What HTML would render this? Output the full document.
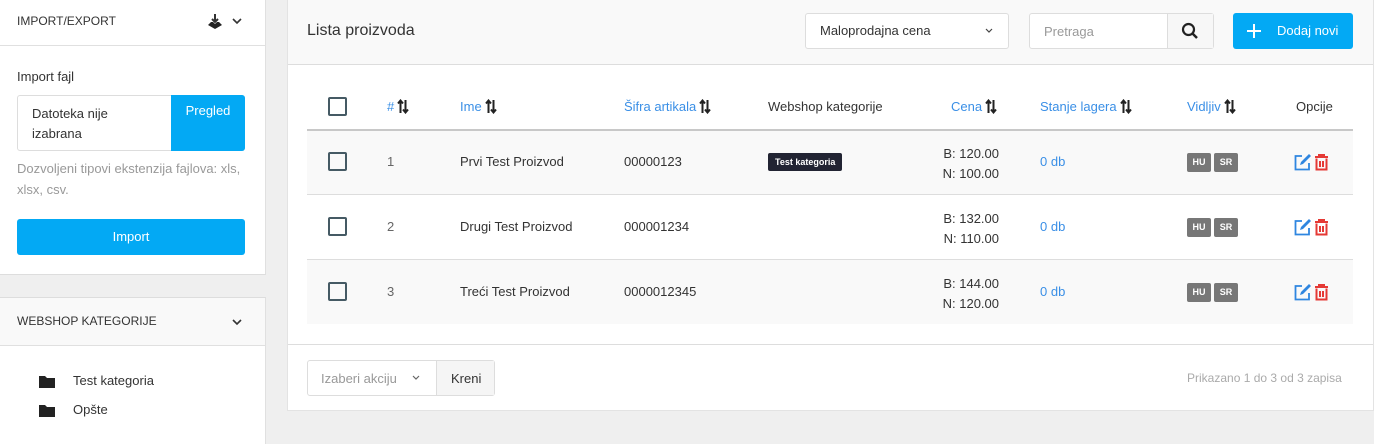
<!DOCTYPE html>
<html><head><meta charset="utf-8"><style>
*{box-sizing:border-box;margin:0;padding:0}
body{width:1374px;height:444px;background:#efefef;font-family:"Liberation Sans",sans-serif;font-size:13px;color:#333;position:relative;overflow:hidden}
.abs{position:absolute}
.side{left:0;width:266px;background:#fff;border-right:1px solid #e0e0e0}
.blue{color:#3a8fe6}
.cb{position:absolute;width:19px;height:19px;border:2px solid #455a64;border-radius:2px}
.th{position:absolute;top:99px;font-size:13px;white-space:nowrap}
.td{position:absolute;font-size:13px}
.badge{display:inline-block;background:#777;color:#fff;font-size:9px;font-weight:bold;width:24px;height:19px;line-height:19px;text-align:center;border-radius:2px;margin-right:3px}
.sort{display:inline-block;vertical-align:-3px;margin-left:3px}
</style></head><body>
<svg width="0" height="0" style="position:absolute"><defs><symbol id="s" viewBox="0 0 12 15"><path d="M3.5 14V2M1 4.5l2.5-3 2.5 3M8.5 1v12M6 10.5l2.5 3 2.5-3" stroke="#222" stroke-width="2" fill="none"/></symbol></defs></svg>
<!-- sidebar card 1 -->
<div class="abs side" style="top:0;height:275px;border-bottom:1px solid #ddd"></div>
<div class="abs" style="left:0;top:45px;width:265px;border-top:1px solid #e0e0e0"></div>
<div class="abs" style="left:17px;top:14px;font-size:12px;color:#333">IMPORT/EXPORT</div>
<svg class="abs" style="left:206px;top:13px" width="18" height="18" viewBox="0 0 18 18"><path d="M9 1v8M6 6l3 3 3-3" stroke="#333" stroke-width="2" fill="none"/><path d="M2 12l3-3h2l2 2 2-2h2l3 3-7 4z" fill="#222"/></svg>
<svg class="abs" style="left:232px;top:17px" width="10" height="8"><path d="M1 2l4 4 4-4" stroke="#333" stroke-width="1.6" fill="none"/></svg>
<div class="abs" style="left:17px;top:69px;font-size:13px">Import fajl</div>
<div class="abs" style="left:17px;top:95px;width:228px;height:56px;border:1px solid #ddd;border-radius:3px;background:#fff"></div>
<div class="abs" style="left:32px;top:104px;line-height:20px;font-size:13px">Datoteka nije<br>izabrana</div>
<div class="abs" style="left:171px;top:95px;width:74px;height:56px;background:#03a9f4;border-radius:0 3px 3px 0;color:#fff;text-align:center;padding-top:8px;font-size:13px">Pregled</div>
<div class="abs" style="left:17px;top:158px;width:240px;line-height:21px;color:#999;font-size:13px">Dozvoljeni tipovi ekstenzija fajlova: xls, xlsx, csv.</div>
<div class="abs" style="left:17px;top:219px;width:228px;height:36px;background:#03a9f4;border-radius:3px;color:#fff;text-align:center;line-height:36px">Import</div>
<!-- sidebar card 2 -->
<div class="abs side" style="top:297px;height:147px;border-top:1px solid #ddd"></div>
<div class="abs" style="left:0;top:298px;width:265px;height:48px;background:#f9f9f9;border-bottom:1px solid #e0e0e0"></div>
<div class="abs" style="left:17px;top:314px;font-size:12px">WEBSHOP KATEGORIJE</div>
<svg class="abs" style="left:232px;top:318px" width="10" height="8"><path d="M1 2l4 4 4-4" stroke="#333" stroke-width="1.6" fill="none"/></svg>
<svg class="abs" style="left:39px;top:375px" width="16" height="13"><path d="M0 1h6l2 2h8v10H0z" fill="#222"/></svg>
<div class="abs" style="left:73px;top:373px">Test kategoria</div>
<svg class="abs" style="left:39px;top:404px" width="16" height="13"><path d="M0 1h6l2 2h8v10H0z" fill="#222"/></svg>
<div class="abs" style="left:73px;top:402px">Opšte</div>
<!-- main card -->
<div class="abs" style="left:287px;top:0;width:1087px;height:411px;background:#fff;border:1px solid #e3e3e3;border-top:none"></div>
<div class="abs" style="left:288px;top:0;width:1085px;height:65px;background:#f9f9f9;border-bottom:1px solid #ddd"></div>
<div class="abs" style="left:307px;top:22px;font-size:16px;color:#333">Lista proizvoda</div>
<div class="abs" style="left:805px;top:13px;width:204px;height:36px;border:1px solid #ddd;border-radius:3px;background:#fff"></div>
<div class="abs" style="left:820px;top:23px">Maloprodajna cena</div>
<svg class="abs" style="left:985px;top:28px" width="8" height="6"><path d="M1 1l3 3 3-3" stroke="#444" stroke-width="1.2" fill="none"/></svg>
<div class="abs" style="left:1029px;top:13px;width:185px;height:36px;border:1px solid #ddd;border-radius:3px;background:#fff"></div>
<div class="abs" style="left:1167px;top:14px;width:46px;height:34px;background:#f7f7f7;border-left:1px solid #ddd"></div>
<div class="abs" style="left:1044px;top:24px;color:#999">Pretraga</div>
<svg class="abs" style="left:1181px;top:22px" width="18" height="18"><circle cx="7.5" cy="7.5" r="5.5" stroke="#222" stroke-width="2.2" fill="none"/><path d="M11.5 11.5l4.5 4.5" stroke="#222" stroke-width="2.5"/></svg>
<div class="abs" style="left:1233px;top:13px;width:120px;height:36px;background:#03a9f4;border-radius:3px"></div>
<svg class="abs" style="left:1246px;top:23px" width="16" height="16"><path d="M8 1v14M1 8h14" stroke="#fff" stroke-width="2"/></svg>
<div class="abs" style="left:1277px;top:23px;color:#fff">Dodaj novi</div>
<!-- table -->
<div class="abs" style="left:307px;top:129px;width:1046px;border-top:2px solid #c8c8c8"></div>
<div class="abs" style="left:307px;top:131px;width:1046px;height:63px;background:#f9f9f9"></div>
<div class="abs" style="left:307px;top:194px;width:1046px;border-top:1px solid #ddd"></div>
<div class="abs" style="left:307px;top:259px;width:1046px;border-top:1px solid #ddd"></div>
<div class="abs" style="left:307px;top:260px;width:1046px;height:64px;background:#f9f9f9"></div>
<div class="cb" style="left:328px;top:97px"></div>
<div class="th blue" style="left:387px">#<svg class="sort" width="12" height="15"><use href="#s"/></svg></div>
<div class="th blue" style="left:460px">Ime<svg class="sort" width="12" height="15"><use href="#s"/></svg></div>
<div class="th blue" style="left:624px">Šifra artikala<svg class="sort" width="12" height="15"><use href="#s"/></svg></div>
<div class="th" style="left:768px">Webshop kategorije</div>
<div class="th blue" style="left:951px">Cena<svg class="sort" width="12" height="15"><use href="#s"/></svg></div>
<div class="th blue" style="left:1040px">Stanje lagera<svg class="sort" width="12" height="15"><use href="#s"/></svg></div>
<div class="th blue" style="left:1187px">Vidljiv<svg class="sort" width="12" height="15"><use href="#s"/></svg></div>
<div class="th" style="left:1296px">Opcije</div>

<div class="cb" style="left:328px;top:152px"></div>
<div class="td" style="left:387px;top:154px;color:#666">1</div>
<div class="td" style="left:460px;top:154px">Prvi Test Proizvod</div>
<div class="td" style="left:624px;top:154px">00000123</div>
<div class="td" style="left:768px;top:153px;background:#222433;color:#fff;font-size:9px;font-weight:bold;padding:4px 7px;border-radius:2px">Test kategoria</div>
<div class="td" style="left:900px;top:144px;width:99px;text-align:right;line-height:20px">B: 120.00<br>N: 100.00</div>
<div class="td blue" style="left:1040px;top:154px">0 db</div>
<div class="td" style="left:1187px;top:153px"><span class="badge">HU</span><span class="badge">SR</span></div>

<div class="cb" style="left:328px;top:217px"></div>
<div class="td" style="left:387px;top:219px;color:#666">2</div>
<div class="td" style="left:460px;top:219px">Drugi Test Proizvod</div>
<div class="td" style="left:624px;top:219px">000001234</div>
<div class="td" style="left:900px;top:209px;width:99px;text-align:right;line-height:20px">B: 132.00<br>N: 110.00</div>
<div class="td blue" style="left:1040px;top:219px">0 db</div>
<div class="td" style="left:1187px;top:218px"><span class="badge">HU</span><span class="badge">SR</span></div>

<div class="cb" style="left:328px;top:282px"></div>
<div class="td" style="left:387px;top:284px;color:#666">3</div>
<div class="td" style="left:460px;top:284px">Treći Test Proizvod</div>
<div class="td" style="left:624px;top:284px">0000012345</div>
<div class="td" style="left:900px;top:274px;width:99px;text-align:right;line-height:20px">B: 144.00<br>N: 120.00</div>
<div class="td blue" style="left:1040px;top:284px">0 db</div>
<div class="td" style="left:1187px;top:283px"><span class="badge">HU</span><span class="badge">SR</span></div>

<!-- option icons -->
<svg class="abs" style="left:1294px;top:153px" width="40" height="18"><path d="M8 3H1.5v13.5H15V10" stroke="#2f86e0" stroke-width="1.8" fill="none"/><path d="M6 12l1-3 8-8 2 2-8 8z" fill="#2f86e0"/><path d="M21 4h13M25 4V2h5v2M22.5 5.5v11h10v-11M26 8v6M29 8v6" stroke="#e53935" stroke-width="2" fill="none"/></svg>
<svg class="abs" style="left:1294px;top:218px" width="40" height="18"><path d="M8 3H1.5v13.5H15V10" stroke="#2f86e0" stroke-width="1.8" fill="none"/><path d="M6 12l1-3 8-8 2 2-8 8z" fill="#2f86e0"/><path d="M21 4h13M25 4V2h5v2M22.5 5.5v11h10v-11M26 8v6M29 8v6" stroke="#e53935" stroke-width="2" fill="none"/></svg>
<svg class="abs" style="left:1294px;top:283px" width="40" height="18"><path d="M8 3H1.5v13.5H15V10" stroke="#2f86e0" stroke-width="1.8" fill="none"/><path d="M6 12l1-3 8-8 2 2-8 8z" fill="#2f86e0"/><path d="M21 4h13M25 4V2h5v2M22.5 5.5v11h10v-11M26 8v6M29 8v6" stroke="#e53935" stroke-width="2" fill="none"/></svg>

<!-- footer -->
<div class="abs" style="left:288px;top:344px;width:1085px;border-top:1px solid #ddd"></div>
<div class="abs" style="left:307px;top:360px;width:188px;height:36px;border:1px solid #ddd;border-radius:3px"></div>
<div class="abs" style="left:436px;top:361px;width:58px;height:34px;background:#f5f5f5;border-left:1px solid #ddd"></div>
<div class="abs" style="left:321px;top:371px;color:#999">Izaberi akciju</div>
<svg class="abs" style="left:412px;top:375px" width="8" height="6"><path d="M1 1l3 3 3-3" stroke="#666" stroke-width="1.2" fill="none"/></svg>
<div class="abs" style="left:451px;top:371px">Kreni</div>
<div class="abs" style="left:1187px;top:371px;color:#aaa;font-size:12px">Prikazano 1 do 3 od 3 zapisa</div>
</body></html>
